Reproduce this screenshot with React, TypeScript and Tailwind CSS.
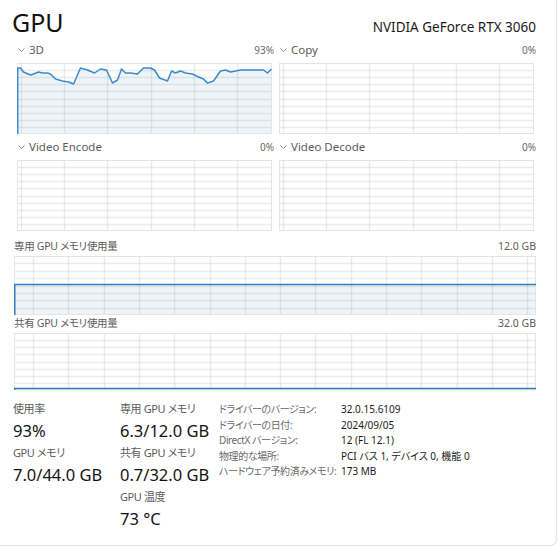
import React from "react";

const font = "font-['Noto_Sans','Noto_Sans_CJK_JP',sans-serif]";

const line3d: [number, number][] = [
  [0, 5], [3, 5], [6, 9], [13, 12], [16, 11], [21, 9], [25, 10], [30, 10], [33, 11], [38, 16],
  [45, 18], [51, 19], [56, 21], [63, 5], [70, 7], [77, 10], [83, 6], [89, 7], [95, 20], [100, 17],
  [104, 6], [108, 10], [113, 10], [120, 11], [126, 5], [133, 5], [137, 7], [142, 15], [150, 18],
  [154, 8], [158, 10], [163, 8], [168, 10], [175, 11], [181, 14], [186, 16], [190, 20], [196, 18],
  [203, 8], [208, 7], [213, 9], [218, 8], [223, 7], [233, 7], [241, 7], [246, 7], [250, 10], [254, 6],
];

type ChartProps = {
  w: number;
  h: number;
  rows: number;
  colOffset: number;
  colStep: number;
  cols: number;
  points?: [number, number][];
  level?: number;
};

function Chart({ w, h, rows, colOffset, colStep, cols, points, level }: ChartProps) {
  const blue = "#3a8bcf";
  let fill: string | null = null;
  let stroke: string | null = null;
  if (points) {
    stroke = points.map(([x, y]) => `${x + 0.5},${y}`).join(" ");
    fill = `0.5,${h} ${stroke} ${points[points.length - 1][0] + 0.5},${h}`;
  } else if (level !== undefined) {
    fill = `0.5,${level} ${w - 0.5},${level} ${w - 0.5},${h} 0.5,${h}`;
  }
  return (
    <svg width={w} height={h} className="block">
      <rect x={0} y={0} width={w} height={h} fill="#ffffff" />
      {fill && <polygon points={fill} fill="#eef4f8" />}
      {Array.from({ length: rows - 1 }, (_, i) => {
        const y = Math.round(((i + 1) * h) / rows) + 0.5;
        return <line key={"r" + i} x1={0} x2={w} y1={y} y2={y} stroke="rgba(0,0,0,0.075)" strokeWidth={1.5} />;
      })}
      {Array.from({ length: cols }, (_, i) => {
        const x = Math.round(colOffset + i * colStep) + 0.5;
        return <line key={"c" + i} x1={x} x2={x} y1={0} y2={h} stroke="rgba(0,0,0,0.075)" strokeWidth={1.5} />;
      })}
      <rect x={0.5} y={0.5} width={w - 1} height={h - 1} fill="none" stroke="#e4e4e4" />
      {stroke && <polyline points={stroke} fill="none" stroke={blue} strokeWidth={1.5} strokeLinejoin="round" />}
      {points && <line x1={0.75} x2={0.75} y1={points[0][1]} y2={h} stroke={blue} strokeWidth={1.5} />}
      {level !== undefined && (
        <>
          <line x1={0} x2={w} y1={level + 0.5} y2={level + 0.5} stroke="#2f7fc0" strokeWidth={1.5} />
          <line x1={0.75} x2={0.75} y1={level} y2={h} stroke="#2f7fc0" strokeWidth={1.5} />
        </>
      )}
    </svg>
  );
}

function Chevron() {
  return (
    <svg width="7" height="4" viewBox="0 0 7 4" className="ml-[1px] mr-[4px]">
      <polyline points="0.5,0.5 3.5,3.5 6.5,0.5" fill="none" stroke="#8a8a8a" strokeWidth="1" />
    </svg>
  );
}

function SmallChart({ title, value, points }: { title: string; value: string; points?: [number, number][] }) {
  return (
    <div className="w-[257px]">
      <div className="flex h-[20px] items-center justify-between">
        <div className="flex items-center text-[11.5px] text-[#5c5c5c]">
          <Chevron />
          {title}
        </div>
        <span className="text-[10px] text-[#6a6a6a]">{value}</span>
      </div>
      <div className="mt-[3px]">
        <Chart w={255} h={71} rows={10} cols={6} colOffset={4} colStep={43.2} points={points} />
      </div>
    </div>
  );
}

function Stat({ label, value }: { label: string; value: string }) {
  return (
    <div>
      <div className="flex h-[20px] items-center text-[11px] tracking-[-0.4px] text-[#5c5c5c]">{label}</div>
      <div className="flex h-[24px] items-center text-[16.5px] text-[#141414]">{value}</div>
    </div>
  );
}

const details: [string, string][] = [
  ["ドライバーのバージョン:", "32.0.15.6109"],
  ["ドライバーの日付:", "2024/09/05"],
  ["DirectX バージョン:", "12 (FL 12.1)"],
  ["物理的な場所:", "PCI バス 1, デバイス 0, 機能 0"],
  ["ハードウェア予約済みメモリ:", "173 MB"],
];

export default function App() {
  return (
    <div className={`h-[548px] w-[560px] bg-white ${font} [font-feature-settings:'palt']`}>
      <div className="h-[546px] w-[557px] rounded-br-[7px] border-b border-r border-[#e3e3e3] bg-white pl-[12px] pr-[20px]">
        <div className="flex h-[40px] items-baseline justify-between pt-[7px]">
          <span className="text-[25px] leading-[30px] text-[#111]">GPU</span>
          <span className="text-[13.5px] leading-[20px] text-[#1b1b1b]">NVIDIA GeForce RTX 3060</span>
        </div>

        <div className="ml-[5px] grid grid-cols-[257px_257px] gap-x-[5px] gap-y-[3px]">
          <SmallChart title="3D" value="93%" points={line3d} />
          <SmallChart title="Copy" value="0%" />
          <SmallChart title="Video Encode" value="0%" />
          <SmallChart title="Video Decode" value="0%" />
        </div>

        <div className="ml-[2px] mt-[7px]">
          <div className="flex h-[18px] items-center justify-between text-[10.5px] text-[#5c5c5c]">
            <span className="tracking-[-0.3px]">専用 GPU メモリ使用量</span>
            <span>12.0 GB</span>
          </div>
          <Chart w={522} h={59} rows={8} cols={15} colOffset={19} colStep={35.3} level={28} />
          <div className="flex h-[18px] items-center justify-between text-[10.5px] text-[#5c5c5c]">
            <span className="tracking-[-0.3px]">共有 GPU メモリ使用量</span>
            <span>32.0 GB</span>
          </div>
          <Chart w={522} h={57} rows={8} cols={15} colOffset={19} colStep={35.3} level={55} />
        </div>

        <div className="ml-[1px] mt-[9px] flex">
          <div className="w-[107px]">
            <Stat label="使用率" value="93%" />
            <Stat label="GPU メモリ" value="7.0/44.0 GB" />
          </div>
          <div className="w-[99px]">
            <Stat label="専用 GPU メモリ" value="6.3/12.0 GB" />
            <Stat label="共有 GPU メモリ" value="0.7/32.0 GB" />
            <Stat label="GPU 温度" value="73 °C" />
          </div>
          <div className="grid grid-cols-[122px_auto] content-start pt-[3px] text-[10px] leading-[15.5px]">
            {details.map(([k, v]) => (
              <React.Fragment key={k}>
                <span className="whitespace-nowrap tracking-[-0.4px] text-[#6a6a6a]">{k}</span>
                <span className="whitespace-nowrap text-[#1b1b1b]">{v}</span>
              </React.Fragment>
            ))}
          </div>
        </div>
      </div>
    </div>
  );
}
